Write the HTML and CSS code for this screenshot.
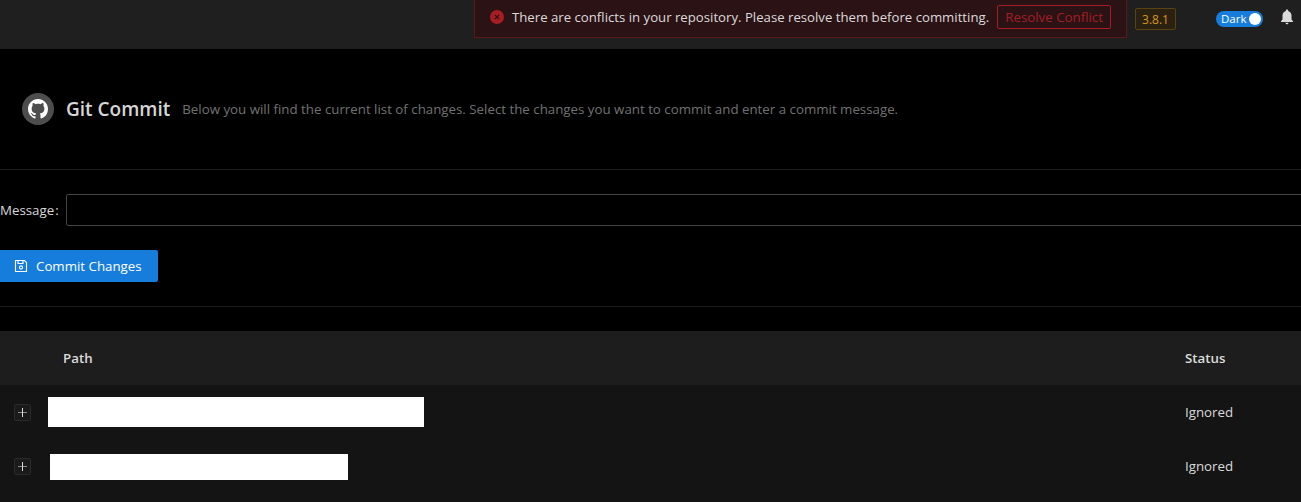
FILE: index.html
```html
<!DOCTYPE html>
<html lang="en">
<head>
  <meta charset="UTF-8" />
  <title>Git Commit</title>
  <link rel="stylesheet" href="styles.css">
</head>
<body>

  <header class="topbar">
    <div class="alert">
      <svg class="alert-icon" viewBox="0 0 14 14" width="14" height="14">
        <circle cx="7" cy="7" r="7" fill="#a61d24"/>
        <path d="M4.900 4.900l4.200 4.200M9.100 4.900l-4.200 4.200" stroke="#2a1215" stroke-width="1.200" fill="none"/>
      </svg>
      <span class="alert-text">There are conflicts in your repository. Please resolve them before committing.</span>
      <button class="resolve-btn">Resolve Conflict</button>
    </div>
    <span class="version">3.8.1</span>
    <div class="switch"><span>Dark</span><i class="knob"></i></div>
    <svg class="bell" viewBox="0 0 16 16" width="16" height="16">
      <path fill="#d9d9d9" d="M8 0.600c-.7 0-1.200.5-1.200 1.200v.3C4.700 2.700 3.500 4.400 3.500 6.500v4L2 12.200v.8h12v-.8l-1.500-1.700v-4c0-2.100-1.200-3.800-3.300-4.400v-.3C9.200 1.100 8.700.6 8 .6zM6.400 13.800c.1.800.8 1.500 1.600 1.500s1.500-.7 1.600-1.500z"/>
    </svg>
  </header>

  <main class="content">
    <section class="page-head">
      <div class="avatar">
        <svg viewBox="0 0 16 16" width="20" height="20">
          <path fill="#fff" d="M8 0C3.580 0 0 3.580 0 8c0 3.540 2.290 6.530 5.470 7.590.4.070.55-.17.55-.38 0-.19-.01-.82-.01-1.490-2.010.37-2.530-.49-2.690-.94-.09-.23-.48-.94-.82-1.130-.28-.15-.68-.52-.01-.53.630-.01 1.080.58 1.230.82.720 1.210 1.870.87 2.330.66.070-.52.280-.87.510-1.070-1.780-.2-3.640-.89-3.640-3.950 0-.87.310-1.590.82-2.150-.08-.2-.36-1.020.08-2.120 0 0 .67-.21 2.200.82.640-.18 1.320-.27 2-.27s1.360.09 2 .27c1.530-1.040 2.200-.82 2.200-.82.440 1.100.16 1.920.08 2.120.51.560.82 1.270.82 2.150 0 3.070-1.870 3.750-3.650 3.950.29.250.54.730.54 1.480 0 1.070-.01 1.930-.01 2.200 0 .21.150.46.550.38A8.010 8.010 0 0 0 16 8c0-4.420-3.580-8-8-8z"/>
        </svg>
      </div>
      <h1>Git Commit</h1>
      <span class="subtitle">Below you will find the current list of changes. Select the changes you want to commit and enter a commit message.</span>
    </section>

    <section class="commit-form">
      <div class="field">
        <label>Message</label>
        <input class="message-input" type="text">
      </div>
      <button class="commit-btn">
        <svg viewBox="0 0 14 14" width="14" height="14" fill="none" stroke="#fff" stroke-width="1.100">
          <path d="M1.500 1.500h9l2 2v9h-11z"/>
          <path d="M4 1.500v3h5v-3"/>
          <circle cx="7" cy="8.500" r="1.600"/>
        </svg>
        Commit Changes
      </button>
    </section>

    <div class="table-wrap">
      <table class="changes">
        <thead>
          <tr><th class="col-expand"></th><th>Path</th><th class="col-status">Status</th></tr>
        </thead>
        <tbody>
          <tr>
            <td class="col-expand"><span class="expand"></span></td>
            <td><div class="redacted redacted-a"></div></td>
            <td class="col-status">Ignored</td>
          </tr>
          <tr>
            <td class="col-expand"><span class="expand"></span></td>
            <td><div class="redacted redacted-b"></div></td>
            <td class="col-status">Ignored</td>
          </tr>
        </tbody>
      </table>
    </div>
  </main>

</body>
</html>
```

FILE: styles.css
```css
html, body {
  height: 100%;
}

body {
  margin: 0;
  background-color: #000;
  color: rgba(255, 255, 255, 0.85);
  font-family: 'Open Sans', 'Noto Sans', sans-serif;
  font-size: 13.3px;
  display: flex;
  flex-direction: column;
  overflow: hidden;
}

/* Top bar */
.topbar {
  flex: none;
  height: 49px;
  box-sizing: border-box;
  background-color: #1f1f1f;
  display: flex;
  align-items: flex-start;
  padding-left: 474px;
}

.alert {
  width: 653px;
  height: 38px;
  box-sizing: border-box;
  background-color: #2a1215;
  border: 1px solid #58181c;
  border-top: none;
  display: flex;
  align-items: center;
  padding: 0 0 4px 15px;
}

.alert-icon {
  flex: none;
  margin-right: 8px;
}

.alert-text {
  color: rgba(255, 255, 255, 0.85);
  font-size: 13.2px;
  white-space: nowrap;
}

.resolve-btn {
  margin-left: 8px;
  height: 24px;
  width: 114px;
  padding: 0;
  background: transparent;
  border: 1px solid #a61d24;
  border-radius: 2px;
  color: #a61d24;
  font: inherit;
}

.version {
  margin: 8px 0 0 8px;
  width: 41px;
  height: 22px;
  box-sizing: border-box;
  background-color: #2b2111;
  border: 1px solid #594214;
  border-radius: 2px;
  color: #d89614;
  font-size: 12px;
  line-height: 21px;
  text-align: center;
}

.switch {
  margin: 11px 0 0 40px;
  width: 47px;
  height: 16px;
  border-radius: 8px;
  background-color: #177ddc;
  color: #fff;
  font-size: 11.5px;
  line-height: 16px;
  display: flex;
  align-items: center;
  justify-content: space-between;
  padding: 0 2px 0 5px;
  box-sizing: border-box;
}

.knob {
  width: 12px;
  height: 12px;
  border-radius: 50%;
  background-color: #fff;
}

.bell {
  margin: 9px 0 0 16px;
}

/* Page */
.content {
  flex: 1;
  min-height: 0;
  display: flex;
  flex-direction: column;
}

.page-head {
  flex: none;
  height: 121px;
  box-sizing: border-box;
  padding: 44px 0 0 22px;
  display: flex;
  align-items: flex-start;
  border-bottom: 1px solid #1c1c1c;
}

.avatar {
  width: 32px;
  height: 32px;
  border-radius: 50%;
  background-color: #4d4d4d;
  display: flex;
  align-items: center;
  justify-content: center;
  margin-right: 12px;
}

h1 {
  margin: 0 12px 0 0;
  font-size: 19px;
  font-weight: 600;
  line-height: 32px;
  color: rgba(255, 255, 255, 0.85);
}

.subtitle {
  line-height: 32px;
  color: rgba(255, 255, 255, 0.45);
  white-space: nowrap;
}

.commit-form {
  flex: none;
  height: 137px;
  box-sizing: border-box;
  padding-top: 24px;
  border-bottom: 1px solid #1c1c1c;
}

.field {
  display: flex;
  align-items: center;
  height: 32px;
  margin-bottom: 24px;
}

label {
  width: 66px;
  flex: none;
  text-align: right;
  padding-right: 8px;
  box-sizing: border-box;
  white-space: nowrap;
}

label::after {
  content: ":";
  margin-left: 1px;
}

.message-input {
  flex: 1;
  height: 32px;
  box-sizing: border-box;
  background: transparent;
  border: 1px solid #434343;
  border-radius: 2px;
  margin-right: -10px;
}

.commit-btn {
  width: 158px;
  height: 32px;
  box-sizing: border-box;
  background-color: #177ddc;
  border: none;
  border-radius: 0 2px 2px 0;
  color: #fff;
  font: inherit;
  display: flex;
  align-items: center;
  gap: 8px;
  padding: 0 0 0 14px;
}

/* Table */
.table-wrap {
  flex: 1;
  min-height: 0;
  margin-top: 24px;
  background-color: #141414;
}

.changes {
  width: 100%;
  border-collapse: collapse;
  table-layout: fixed;
}

.changes th {
  height: 54px;
  padding: 0;
  background-color: #1d1d1d;
  text-align: left;
  font-weight: 600;
}

.changes td {
  height: 54px;
  padding: 0;
}

.col-expand {
  width: 48px;
}

.col-status {
  width: 116px;
}

thead th:nth-child(2) {
  padding-left: 15px;
}

.expand {
  display: block;
  position: relative;
  width: 17px;
  height: 17px;
  box-sizing: border-box;
  margin-left: 14px;
  background-color: #1a1a1a;
  border: 1px solid #2a2a2a;
  border-radius: 2px;
}

.expand::before,
.expand::after {
  content: "";
  position: absolute;
}

.expand::before {
  left: 3px;
  right: 3px;
  top: 7px;
  height: 1px;
  background-color: #8c8c8c;
}

.expand::after {
  top: 3px;
  bottom: 3px;
  left: 7px;
  width: 1px;
  background-color: #d9d9d9;
}

.redacted {
  background-color: #fff;
}

.redacted-a {
  width: 376px;
  height: 30px;
}

.redacted-b {
  width: 298px;
  height: 26px;
  margin: 2px 0 0 2px;
}
```
